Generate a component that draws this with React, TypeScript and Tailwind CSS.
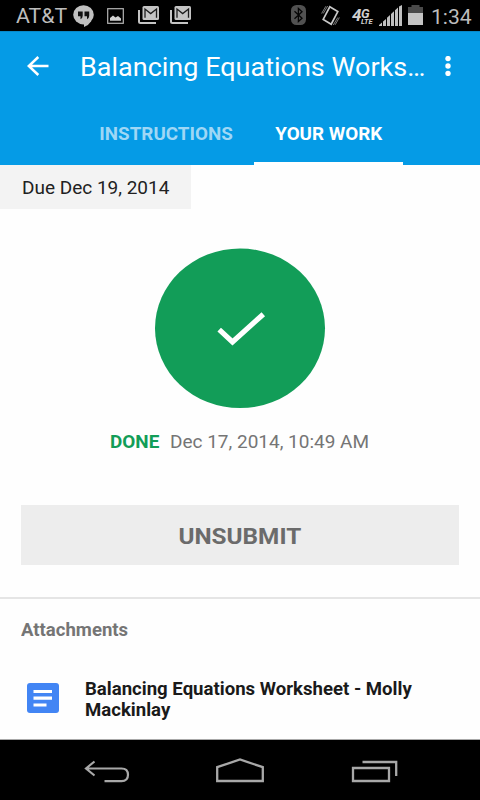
interface Tab {
  id: string
  label: string
  className: string
}

interface Attachment {
  id: string
  title: string
}

const tabs: Tab[] = [
  { id: "instructions", label: "INSTRUCTIONS", className: "ml-[78px] w-[176px] text-[#9fd7f5]" },
  { id: "work", label: "YOUR WORK", className: "w-[149px] pl-[7px] text-white border-b-[3px] border-white" },
]

const attachments: Attachment[] = [
  { id: "1", title: "Balancing Equations Worksheet - Molly Mackinlay" },
]

function GmailStackIcon({ className }: { className: string }) {
  return (
    <svg viewBox="0 0 21 18" fill="none" className={`w-[21px] h-[18px] ${className}`}>
      <path d="M1 4v11.5q0 1.5 1.5 1.5H18" stroke="#c4c4c4" strokeWidth="2" />
      <rect x="4.5" y="0" width="16.5" height="14" rx="1.5" fill="#c4c4c4" />
      <path d="M7 11.8V3l5.7 4.6L18.5 3v8.8" stroke="#1c1c1c" strokeWidth="1.3" />
    </svg>
  )
}

function StatusBar() {
  return (
    <div className="h-[31px] shrink-0 bg-black flex items-center text-[#bdbdbd] overflow-hidden">
      <span className="ml-4 w-[53px] pt-px origin-left scale-x-[1.067] text-[20px] leading-none">AT&amp;T</span>

      {/* Hangouts */}
      <svg viewBox="0 0 21 22" className="ml-1 w-[21px] h-[22px]">
        <ellipse cx="10.5" cy="9.8" rx="10.3" ry="9.6" fill="#c0c0c0" />
        <path d="M11 17v5q5-2 7.4-6z" fill="#c0c0c0" />
        <path
          d="M5 6.5h4.7v4.3q0 2.5-2.2 3.4v-3H5zM11.5 6.5h4.7v4.3q0 2.5-2.2 3.4v-3h-2.5z"
          fill="#111"
        />
      </svg>

      {/* Screenshot saved */}
      <svg viewBox="0 0 17 16" className="ml-[12.5px] w-[17px] h-4">
        <rect x=".7" y=".7" width="15.6" height="14.6" fill="none" stroke="#b4b4b4" strokeWidth="1.2" />
        <path d="M3 12.8V10l3-2.5 2.5 2 2.5-1.5 3 2.5v2.3z" fill="#d0d0d0" />
      </svg>

      <GmailStackIcon className="ml-[14px] -mt-px" />
      <GmailStackIcon className="ml-[11px] -mt-px" />

      {/* Bluetooth */}
      <svg viewBox="0 0 15 20" fill="none" className="ml-auto mb-px w-[15px] h-5">
        <rect width="15" height="20" rx="5.5" fill="#515151" />
        <path d="M3.5 6.2l7.5 7-3.6 3.3v-13L11 6.8l-7.5 7" stroke="#050505" strokeWidth="1.3" />
      </svg>

      {/* Vibrate */}
      <svg viewBox="0 0 19 21" fill="none" className="ml-[15.5px] w-[19px] h-[21px]">
        <path d="M8.8 1.8l8 4.8-6.6 12.6-8-4.8z" stroke="#c8c8c8" strokeWidth="1.7" />
        <path
          d="M.6 8.5l4.3-7.3M2.2 8.500l4.500-7.500M18.400 12.500l-4.300 7.300M16.800 12.500l-4.500 7.500"
          stroke="#8a8a8a"
          strokeWidth=".9"
        />
      </svg>

      {/* Network type */}
      <div className="ml-[12px] flex w-[23px] h-5 font-bold italic text-[#d0d0d0]">
        <span className="w-[9px] text-[17px] leading-[18px]">4</span>
        <span className="flex w-[14px] flex-col">
          <span className="h-[12px] text-[13px] leading-[15px]">G</span>
          <span className="h-[8px] text-[7.5px] leading-[8px]">LTE</span>
        </span>
      </div>

      {/* Signal */}
      <svg viewBox="0 0 23 21" className="ml-1 w-[23px] h-[21px]" fill="#c0c0c0">
        <path d="M0 21v-1l3-2.6V21zM4 21v-4.4l3-2.7V21zM8 21v-8.2l3-2.7v10.900zM12 21V9l3-2.700V21zM16 21V5.300l3-2.700V21zM20 21V1.600L23 0v21z" />
      </svg>

      {/* Battery */}
      <svg viewBox="0 0 15 20" className="ml-[6px] mb-px w-[15px] h-5">
        <path d="M0 2h3.5V0h8v2H15v6H0z" fill="#4a4a4a" />
        <rect y="8" width="15" height="12" fill="#c4c4c4" />
      </svg>

      <span className="ml-[8px] mr-[8px] pt-[3px] w-[41px] origin-left scale-x-[1.03] text-[20.5px] leading-none">
        1:34
      </span>
    </div>
  )
}

function AppBar() {
  return (
    <header className="h-[134px] shrink-0 bg-[#059be6] flex flex-col border-t border-[#0788ca] text-white">
      <div className="h-[69px] flex items-center">
        <button type="button" aria-label="Back" className="ml-[27px] mb-px w-[22px]">
          <svg viewBox="0 0 22 20" fill="none" className="block w-[22px] h-5">
            <path d="M11.3 1L1.8 10l9.5 9M2 10h19.5" stroke="#fff" strokeWidth="2.5" />
          </svg>
        </button>
        <h1 className="ml-[31px] mt-[2px] w-[360px] origin-left scale-x-[1.08] text-[25px] leading-none whitespace-nowrap">
          Balancing Equations Works…
        </h1>
        <button type="button" aria-label="More options" className="mr-[29px] mb-px ml-auto">
          <svg viewBox="0 0 6 20" fill="#fff" className="block w-1.5 h-5">
            <circle cx="3" cy="2.6" r="2.7" />
            <circle cx="3" cy="10" r="2.7" />
            <circle cx="3" cy="17.4" r="2.7" />
          </svg>
        </button>
      </div>
      <nav className="flex-1 flex">
        {tabs.map((tab) => (
          <button
            key={tab.id}
            type="button"
            className={`flex justify-center items-start pt-[23px] pr-[6px] pl-[6px] text-[17.5px] leading-5 font-bold ${tab.className}`}
          >
            <span className="scale-x-[1.075] whitespace-nowrap">{tab.label}</span>
          </button>
        ))}
      </nav>
    </header>
  )
}

function Submission() {
  return (
    <section className="flex flex-col">
      <div className="w-[191px] h-11 bg-[#f3f3f3] pl-[21.5px] flex items-center text-[18px] text-[#212121]">
        <span className="origin-left scale-x-[1.055] whitespace-nowrap">Due Dec 19, 2014</span>
      </div>

      <svg viewBox="0 0 171 161" className="mt-[39px] self-center w-[171px] h-[161px]">
        <ellipse cx="85" cy="80.3" rx="85" ry="79.8" fill="#129d58" />
        <path d="M64.2 81.7L77.500 94 108.300 66.200" fill="none" stroke="#fff" strokeWidth="5.2" />
      </svg>

      <p className="mt-[21px] h-6 flex items-center text-[17.5px] leading-6 whitespace-nowrap">
        <span className="ml-[109.5px] w-[60.5px] origin-left scale-x-[1.08] font-bold text-[#129d58]">DONE</span>
        <span className="origin-left scale-x-[1.085] text-[#757575]">Dec 17, 2014, 10:49 AM</span>
      </p>

      <button
        type="button"
        className="mt-[51px] mx-[21px] h-[60px] pt-[3px] bg-[#ededed] text-[22.5px] font-bold text-[#6b6b6b]"
      >
        <span className="inline-block scale-x-[1.08]">UNSUBMIT</span>
      </button>
    </section>
  )
}

function Attachments() {
  return (
    <section className="mt-8 flex-1 border-t-2 border-[#e5e5e5] font-bold">
      <h2 className="mt-[21px] ml-[21px] origin-left scale-x-[1.06] text-[17.5px] leading-5 text-[#757575]">
        Attachments
      </h2>
      {attachments.map((attachment) => (
        <div key={attachment.id} className="mt-[39px] flex items-center">
          <svg viewBox="0 0 32 30" className="ml-[27px] mb-[3px] w-8 h-[30px]">
            <rect width="32" height="30" rx="3" fill="#4285f4" />
            <path d="M6.5 8.5h18.5M6.5 15.2h18.5M6.5 22h13" stroke="#fff" strokeWidth="3.2" />
          </svg>
          <p className="ml-[26px] w-[330px] origin-left scale-x-[1.062] text-[17.5px] leading-[20.5px] text-[#1a1a1a]">
            {attachment.title}
          </p>
        </div>
      ))}
    </section>
  )
}

function NavigationBar() {
  return (
    <nav className="h-[61px] shrink-0 bg-black border-t border-[#a8a8a8] flex items-start">
      <svg viewBox="0 0 46 26" fill="none" stroke="#a8a8a8" strokeWidth="2.2" className="mt-[19px] ml-[84px] w-[46px] h-[26px]">
        <path d="M10.5 2.500L2 9.500l8.500 7M2 9.500h35.500q6.500 0 6.500 6.300t-6.500 6.300H20.500" />
      </svg>
      <svg viewBox="0 0 50 26" fill="none" stroke="#a8a8a8" strokeWidth="2.3" className="mt-[17px] ml-[85px] w-[50px] h-[26px]">
        <path d="M2.2 24V10.200L25 2.500l22.800 7.700V24z" />
      </svg>
      <svg viewBox="0 0 48 26" fill="none" stroke="#a8a8a8" strokeWidth="2.3" className="mt-[17px] ml-[86px] w-[48px] h-[26px]">
        <path d="M2 11h36v13H2zM11.5 5H45.200v14" />
      </svg>
    </nav>
  )
}

function App() {
  return (
    <div className="w-[480px] h-[800px] flex flex-col overflow-hidden bg-[#fefefe] font-[Roboto,sans-serif]">
      <StatusBar />
      <AppBar />
      <main className="flex-1 min-h-0 flex flex-col">
        <Submission />
        <Attachments />
      </main>
      <NavigationBar />
    </div>
  )
}

export default App
